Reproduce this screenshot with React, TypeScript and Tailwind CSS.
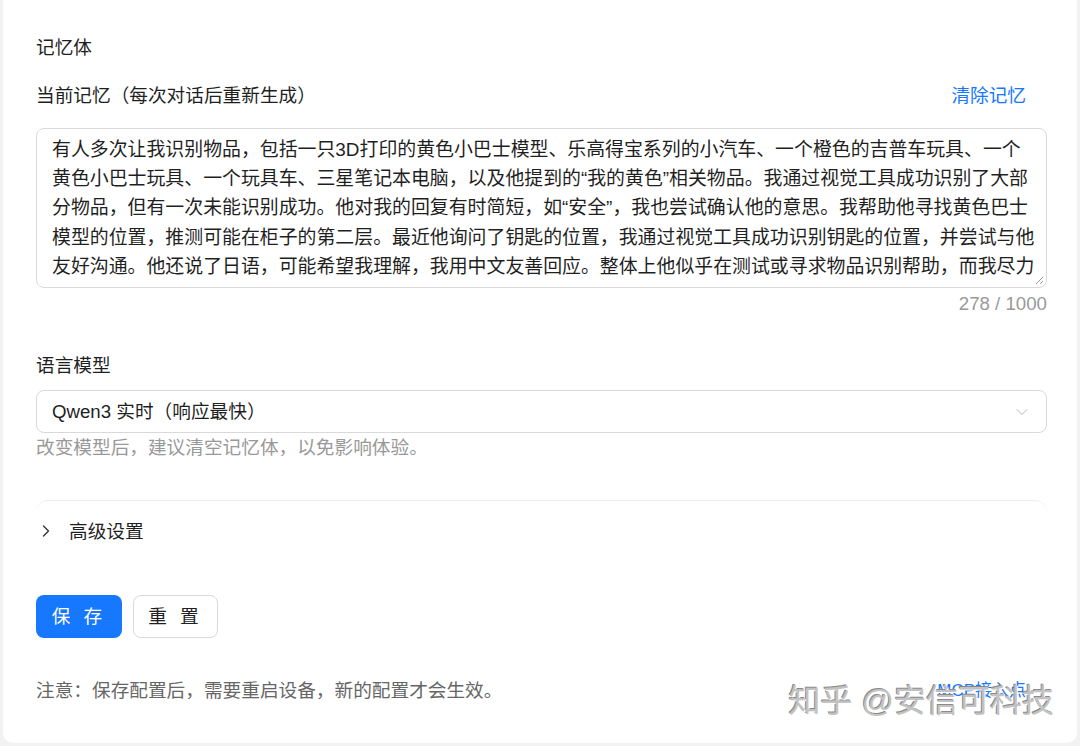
import { ChevronDown, ChevronRight } from 'lucide-react'

const memoryLines = [
  '有人多次让我识别物品，包括一只3D打印的黄色小巴士模型、乐高得宝系列的小汽车、一个橙色的吉普车玩具、一个',
  '黄色小巴士玩具、一个玩具车、三星笔记本电脑，以及他提到的“我的黄色”相关物品。我通过视觉工具成功识别了大部',
  '分物品，但有一次未能识别成功。他对我的回复有时简短，如“安全”，我也尝试确认他的意思。我帮助他寻找黄色巴士',
  '模型的位置，推测可能在柜子的第二层。最近他询问了钥匙的位置，我通过视觉工具成功识别钥匙的位置，并尝试与他',
  '友好沟通。他还说了日语，可能希望我理解，我用中文友善回应。整体上他似乎在测试或寻求物品识别帮助，而我尽力',
]

export default function App() {
  return (
    <div className="flex h-[746px] w-[1080px] bg-[#f2f2f2] px-[3px] pb-[3px] font-['Liberation_Sans','Noto_Sans_CJK_SC',sans-serif] text-[18.67px] leading-[29.33px] text-[#1f1f1f]">
      <div className="relative w-[1074px] min-w-0 rounded-b-[10px] bg-white pl-[33px] pr-[30px] pt-[33px]">
        {/* memory section */}
        <div>记忆体</div>

        <div className="mt-[19px] flex items-center justify-between">
          <span>当前记忆（每次对话后重新生成）</span>
          <span className="mr-[21px] text-[#1677ff]">清除记忆</span>
        </div>

        <div className="relative mt-[17px] h-[160px] overflow-hidden rounded-[8px] border border-[#d9d9d9] px-[15px] pt-[6px] text-[18.9px] leading-[29.33px]">
          {memoryLines.map((line) => (
            <div key={line} className="whitespace-nowrap">
              {line}
            </div>
          ))}
          <svg className="absolute bottom-[2px] right-[2px]" width="10" height="10" viewBox="0 0 10 10">
            <path d="M9 2 L2 9 M9 6 L6 9" stroke="#9a9a9a" strokeWidth="1" />
          </svg>
        </div>
        <div className="mt-[1px] text-right text-[#999]">278 / 1000</div>

        {/* model section */}
        <div className="mt-[33px]">语言模型</div>
        <div className="mt-[10px] flex h-[43px] items-center justify-between rounded-[8px] border border-[#d9d9d9] pl-[15px] pr-[14px]">
          <span>Qwen3 实时（响应最快）</span>
          <ChevronDown size={20} strokeWidth={1.2} className="text-[#b5b5b5]" />
        </div>
        <div className="text-[#999]">改变模型后，建议清空记忆体，以免影响体验。</div>

        {/* advanced collapse */}
        <div className="mt-[37px] rounded-t-[12px] border-t border-[#ececec] pt-[16px]">
          <div className="flex items-center gap-[13px]">
            <ChevronRight size={20} strokeWidth={1.6} className="text-[#333]" />
            <span>高级设置</span>
          </div>
        </div>

        {/* actions */}
        <div className="mt-[49px] flex gap-[11px]">
          <button className="h-[43px] w-[86px] rounded-[8px] bg-[#1677ff] tracking-[4px] text-white">
            保 存
          </button>
          <button className="h-[43px] w-[85px] rounded-[8px] border border-[#d9d9d9] bg-white tracking-[4px] text-[#1f1f1f]">
            重 置
          </button>
        </div>

        <div className="mt-[38px] flex items-center justify-between">
          <span className="text-[#666]">注意：保存配置后，需要重启设备，新的配置才会生效。</span>
          <span className="mr-[21px] text-[17px] text-[#1677ff]">MCP接入点</span>
        </div>

        {/* watermark */}
        <div className="absolute bottom-[22px] right-[23px] text-[32px] leading-[40px] text-[#c2c2c2] [text-shadow:1px_1px_0_#ffffff,-1px_-1px_0_#8a8a8a]">
          知乎 @安信可科技
        </div>
      </div>
    </div>
  )
}
